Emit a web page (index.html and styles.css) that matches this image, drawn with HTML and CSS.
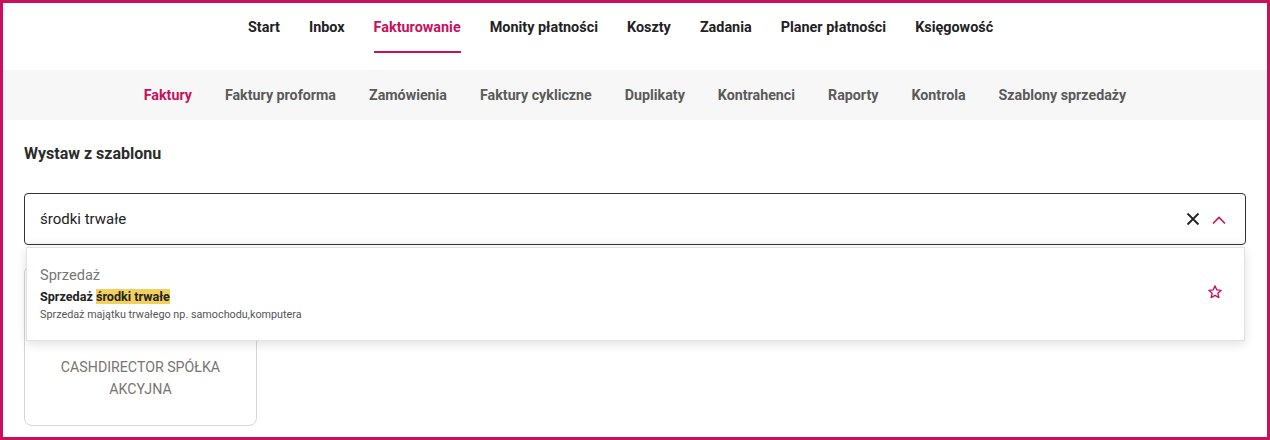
FILE: index.html
```html
<!DOCTYPE html>
<html lang="pl">
<head>
<meta charset="utf-8">
<link rel="stylesheet" href="styles.css">
</head>
<body>
<div class="frame">
  <nav class="topnav">
    <a class="tn">Start</a>
    <a class="tn">Inbox</a>
    <a class="tn active">Fakturowanie</a>
    <a class="tn">Monity płatności</a>
    <a class="tn">Koszty</a>
    <a class="tn">Zadania</a>
    <a class="tn">Planer płatności</a>
    <a class="tn">Księgowość</a>
  </nav>
  <nav class="subnav">
    <a class="sn active">Faktury</a>
    <a class="sn">Faktury proforma</a>
    <a class="sn">Zamówienia</a>
    <a class="sn">Faktury cykliczne</a>
    <a class="sn">Duplikaty</a>
    <a class="sn">Kontrahenci</a>
    <a class="sn">Raporty</a>
    <a class="sn">Kontrola</a>
    <a class="sn">Szablony sprzedaży</a>
  </nav>
  <main class="main">
    <h2 class="title">Wystaw z szablonu</h2>
    <div class="combo">
      <div class="input">
        <span class="value">środki trwałe</span>
        <span class="icons">
          <svg class="ic-x" width="14" height="14" viewBox="0 0 14 14"><path d="M1.5 1.5 L12.5 12.5 M12.5 1.5 L1.5 12.5" stroke="#222" stroke-width="1.8" fill="none"/></svg>
          <svg class="ic-up" width="16" height="10" viewBox="0 0 16 10"><path d="M2 8.5 L8 2.5 L14 8.5" stroke="#c8105c" stroke-width="1.6" fill="none"/></svg>
        </span>
      </div>
      <div class="dropdown">
        <div class="option">
          <div class="opt-text">
            <div class="group">Sprzedaż</div>
            <div class="opt-title">Sprzedaż <mark class="hl">środki trwałe</mark></div>
            <div class="opt-desc">Sprzedaż majątku trwałego np. samochodu,komputera</div>
          </div>
          <svg class="star" width="16" height="16" viewBox="0 0 24 24"><path d="M12 2.8 L14.7 8.9 L21.3 9.5 L16.3 13.9 L17.8 20.4 L12 17 L6.2 20.4 L7.7 13.9 L2.7 9.5 L9.3 8.9 Z" stroke="#c8105c" stroke-width="2" fill="none" stroke-linejoin="round"/></svg>
        </div>
      </div>
    </div>
    <div class="card">
      <div class="card-name">CASHDIRECTOR SPÓŁKA<br>AKCYJNA</div>
    </div>
  </main>
</div>
</body>
</html>
```

FILE: styles.css
```css
* { box-sizing: border-box; }
html, body { margin: 0; padding: 0; background: #fff; }
body { font-family: Roboto, "Liberation Sans", Arial, sans-serif; }
.frame {
  width: 1270px;
  height: 440px;
  border: 3px solid #c8105c;
  overflow: hidden;
  background: #fff;
}
.topnav {
  display: flex;
  height: 67px;
  padding-left: 245px;
  gap: 29px;
}
.tn {
  font-size: 14.4px;
  font-weight: 700;
  color: #222;
  line-height: 20px;
  padding-top: 15px;
  padding-bottom: 13px;
  border-bottom: 2px solid transparent;
  height: 50px;
}
.tn.active { color: #c8105c; border-bottom-color: #c8105c; }
.subnav {
  display: flex;
  justify-content: center;
  align-items: center;
  gap: 33px;
  height: 50px;
  background: #f7f7f7;
}
.sn {
  font-size: 14.25px;
  font-weight: 700;
  color: #5a5a5a;
  line-height: 20px;
}
.sn.active { color: #c8105c; }
.main { padding: 24px 21px 0; }
.title {
  margin: 0;
  font-size: 16px;
  font-weight: 700;
  color: #2b2b2b;
  line-height: 20px;
}
.combo { position: relative; margin-top: 29px; }
.input {
  height: 52px;
  border: 1px solid #333;
  border-radius: 4px;
  display: flex;
  align-items: center;
  padding: 0 18px 0 15px;
  box-shadow: inset 0 -8px 10px -8px rgba(0,0,0,0.06);
}
.value { flex: 1; font-size: 15px; color: #222; }
.icons { display: flex; align-items: center; gap: 11px; }
.ic-up { margin-top: 1px; }
.dropdown {
  position: absolute;
  top: calc(100% + 2px);
  left: 2px;
  right: 1px;
  background: #fff;
  border: 1px solid #e2e2e2;
  box-shadow: 0 3px 10px rgba(0,0,0,0.12);
  z-index: 5;
}
.option {
  display: flex;
  align-items: center;
  padding: 17px 21px 17px 13px;
}
.opt-text { flex: 1; }
.group { font-size: 14.6px; color: #777; line-height: 20px; margin-bottom: 4px; }
.opt-title { font-size: 12.6px; font-weight: 700; color: #222; line-height: 16px; }
.hl { background: #f1d15c; color: #222; padding: 0; }
.opt-desc { font-size: 10.8px; color: #555; line-height: 16px; margin-top: 2px; }
.star { margin-top: -4px; }
.card {
  width: 233px;
  height: 161px;
  margin-top: 20px;
  border: 1px solid #d6d6d6;
  border-radius: 8px;
  padding-top: 90px;
  text-align: center;
}
.card-name { font-size: 14.2px; color: #7a7470; line-height: 22px; }
```
